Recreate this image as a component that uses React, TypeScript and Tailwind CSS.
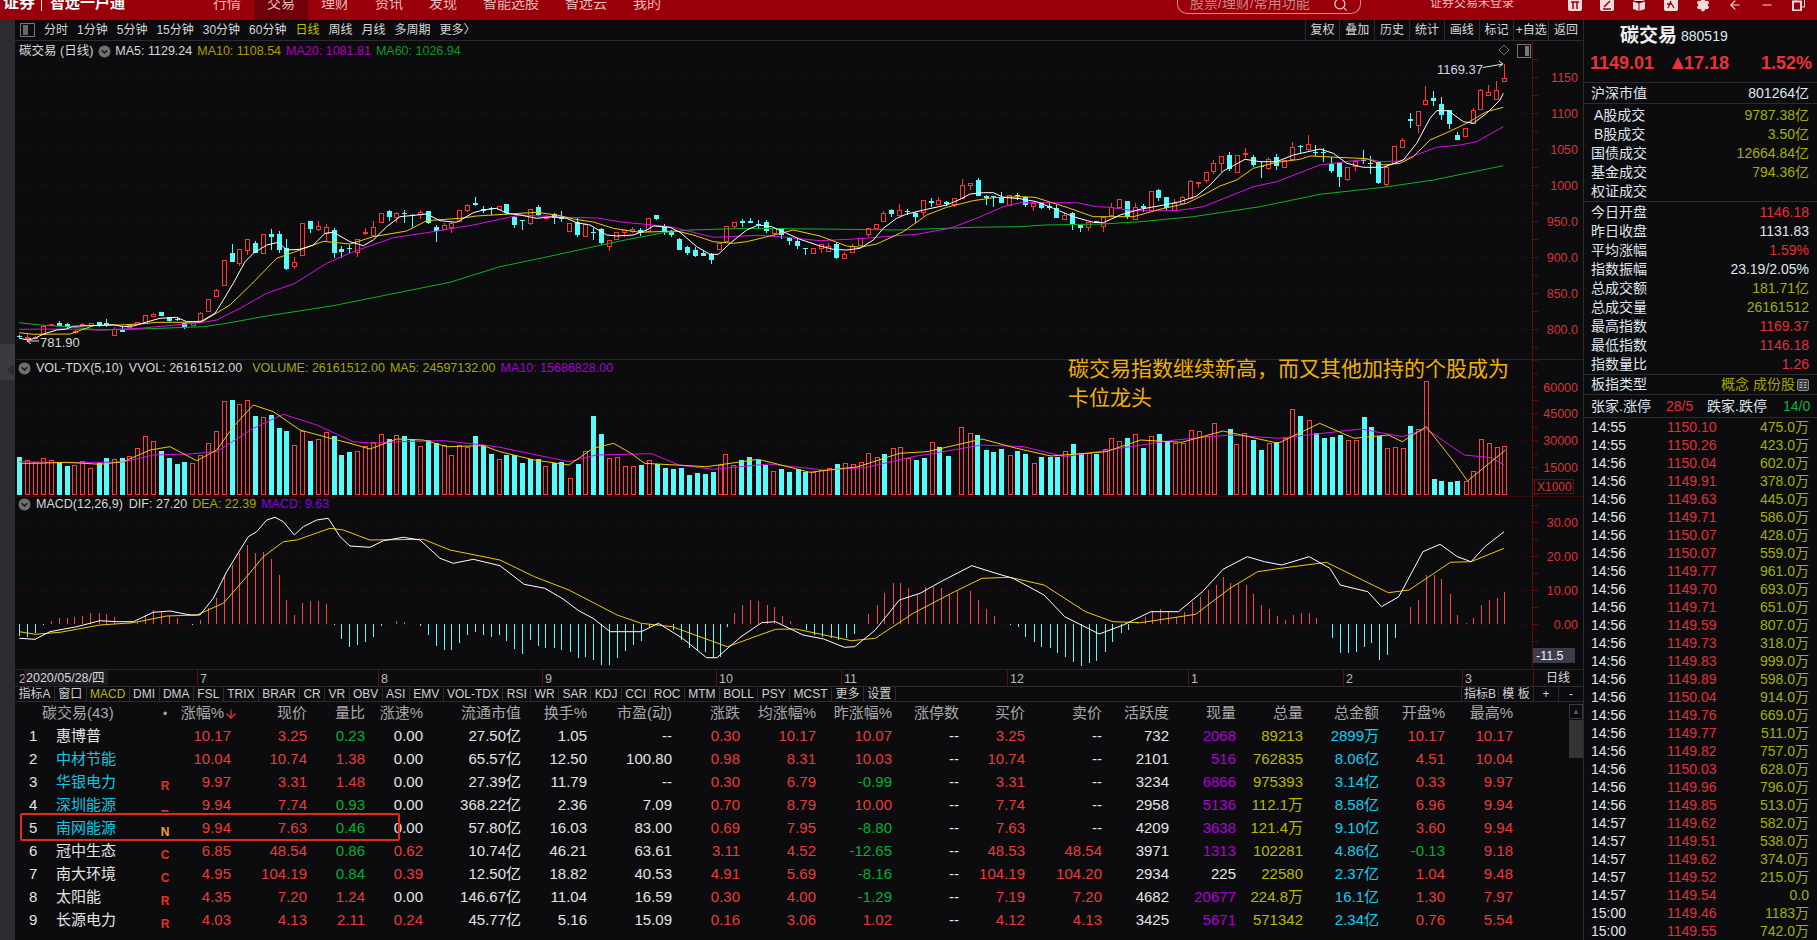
import React from 'react';
import { ArrowDown, ArrowLeft, Minus, Search, Settings } from 'lucide-react';

type Pt = (x: number, y: number) => [number, number];

// chart data was read off in crop coordinates, these map it back to the page
const z7: Pt = (x, y) => [x / 3, 30 + y / 3];
const z8: Pt = (x, y) => [1300 + x / 3, 40 + y / 3];
const z9: Pt = (x, y) => [x / 3, 350 + y / 3];
const z10: Pt = (x, y) => [500 + x / 3, 150 + y / 3];
const z11: Pt = (x, y) => [1000 + x / 3, 100 + y / 3];
const z12: Pt = (x, y) => [500 + x / 1.452, 355 + y / 3];

const pts = (map: Pt, s: string) =>
  s
    .trim()
    .split(/\s+/)
    .map((p) => {
      const [x, y] = p.split(',').map(Number);
      const [a, b] = map(x, y);
      return `${a.toFixed(1)},${b.toFixed(1)}`;
    })
    .join(' ');

const ma5 = [
  pts(z7, '58,925 85,930 105,925 130,912 170,900 200,897 218,889 270,887 340,884 370,890 400,888 440,876 480,865 530,862 560,875 600,876 645,850 670,810 700,760 735,695 760,670 800,645 835,637 860,660 900,658 940,645 975,610 1000,607 1050,635 1090,647 1120,630 1160,590 1200,560 1280,552 1320,572 1370,577 1420,548 1450,540 1490,535 1520,550'),
  pts(z10, '60,195 110,205 160,200 200,205 230,218 270,225 320,255 350,258 400,255 440,240 460,228 510,232 540,247 590,290 630,313 655,313 690,280 740,240 775,225 815,230 860,250 900,268 960,288 1000,298 1040,300 1080,295 1120,270 1150,235 1190,205 1220,192 1280,178 1340,165 1380,148 1410,132 1450,128 1480,128 1510,142'),
  pts(z11, '60,296 110,305 160,325 220,350 280,367 310,368 360,345 420,328 480,317 540,305 590,288 630,255 670,213 700,197 735,178 780,185 830,185 880,165 960,147 1000,160 1040,190 1090,202 1150,202 1210,180 1250,130 1290,55 1310,32 1345,32 1390,65 1420,70 1460,40 1500,0'),
  pts(z8, '610,160'),
].join(' ');
const ma10 = [
  pts(z7, '58,908 100,913 210,912 280,887 360,885 420,882 470,877 560,877 610,873 690,825 755,762 830,685 900,660 970,634 1050,642 1120,620 1220,603 1280,572 1380,565 1430,558'),
  pts(z10, '60,190 110,187 170,195 220,207 280,216 340,235 420,247 530,243 580,255 640,275 700,280 740,275 810,258 880,240 960,258 1040,288 1080,292 1130,282 1210,245 1280,195 1340,172 1420,152 1480,143'),
  pts(z11, '60,290 105,292 140,303 200,322 280,350 400,350 480,328 560,310 620,280 660,258 710,240 760,205 830,187 900,178 930,168 1100,176 1150,195 1200,190 1240,170 1290,120 1340,98 1400,70 1460,35 1510,22'),
].join(' ');
const ma20 = [
  pts(z7, '58,898 200,897 300,900 420,895 600,878 650,870 720,835 800,790 885,760 980,700 1060,665 1180,623 1300,605 1420,585'),
  pts(z10, '60,195 200,202 290,204 370,217 460,225 520,232 640,262 780,256 860,262 960,272 1080,266 1180,258 1250,253 1350,235 1430,205 1510,170'),
  pts(z11, '60,308 230,308 290,320 330,322 400,332 530,332 610,320 760,260 830,245 960,195 1060,182 1110,178 1140,185 1200,183 1310,142 1380,135 1430,125 1510,80'),
].join(' ');
const ma60 = [
  pts(z7, '58,878 120,885 200,890 300,900 420,897 610,890 680,880 800,858 1000,827 1170,793 1350,757'),
  pts(z10, '0,350 130,323 350,275 490,248 570,240 740,235 1040,238 1200,240 1420,232'),
  pts(z11, '60,380 135,375 310,372 420,365 580,350 780,320 960,283 1150,262 1300,240 1510,197'),
].join(' ');

// x top bottom high low, r = up (hollow red), c = down (solid cyan)
const candleSets: [Pt, string][] = [
  [
    z7,
    `58 917 921 914 925 c;82 920 924 913 928 r;106 921 923 918 926 r;130 887 912 885 915 r;154 883 886 883 886 r;178 880 888 874 888 c;202 883 892 880 893 c;224 902 905 898 912 r;246 882 885 878 886 r;272 880 884 880 885 r;296 877 884 876 890 c;318 880 884 867 890 c;343 896 915 892 917 r;367 901 905 890 907 c;388 884 892 884 893 r;412 877 882 876 885 r;436 856 878 856 878 r;460 853 858 849 862 r;484 847 858 846 858 c;508 862 872 860 875 c;532 868 871 860 873 c;553 880 890 878 896 c;578 878 885 878 885 r;601 848 876 847 878 r;625 806 844 806 844 r;649 781 798 776 800 r;673 691 766 691 766 r;697 670 695 642 695 c;718 658 698 658 708 r;742 628 660 628 675 r;766 640 668 634 668 c;790 613 668 612 668 r;814 612 622 597 660 c;838 612 660 603 670 c;859 655 716 627 720 c;883 697 707 681 718 r;907 580 676 580 676 r;931 574 597 574 608 c;955 589 598 572 604 r;979 590 608 583 632 r;1003 600 670 595 684 c;1024 657 666 648 684 c;1048 655 656 644 670 c;1072 626 665 626 682 r;1096 605 610 594 614 r;1120 592 614 574 622 r;1144 550 575 550 575 r;1168 543 560 540 572 c;1189 548 560 546 580 r;1213 548 552 540 578 c;1237 555 558 552 590 c;1261 545 552 541 568 r;1285 544 578 542 582 c;1309 590 602 586 637 c;1333 586 598 578 600 r;1354 580 592 574 608 r;1378 539 573 539 575 r;1402 524 540 522 545 r;1426 519 524 501 528 c;1450 536 543 529 550 c;1474 535 537 530 555 c;1498 527 536 527 536 r;1519 523 550 523 555 c;1543 561 585 558 594 c`,
  ],
  [
    z10,
    `67 211 213 211 240 c;91 178 218 178 225 r;115 171 195 165 198 c;139 198 203 195 210 r;163 193 205 189 222 c;184 200 208 183 216 c;208 220 243 220 246 r;232 217 255 205 261 c;256 222 258 220 262 r;280 247 250 235 270 c;304 238 280 234 284 c;328 271 287 271 303 r;349 247 266 247 267 r;373 239 247 239 260 r;397 238 243 232 250 r;421 240 248 235 258 c;445 205 242 205 246 r;469 195 207 195 210 c;493 228 246 222 256 c;514 246 255 240 260 c;538 267 300 264 300 c;562 291 308 288 315 c;586 300 318 290 320 c;610 309 317 300 318 c;634 313 330 309 342 c;658 280 296 280 297 r;679 229 272 229 274 r;703 217 227 217 237 r;727 214 219 208 231 c;751 213 218 204 219 c;775 221 224 210 234 c;799 216 242 210 249 c;823 235 248 235 259 r;844 234 255 234 268 c;868 264 272 260 285 c;892 273 288 263 297 c;916 295 298 295 315 c;940 295 308 295 309 r;964 281 293 281 309 r;985 288 302 280 303 r;1009 282 325 278 328 c;1033 313 324 306 328 r;1057 287 305 283 306 r;1081 265 285 265 287 r;1105 235 251 235 261 r;1129 223 234 223 238 r;1150 190 213 184 214 r;1174 180 192 177 201 c;1198 180 195 162 198 r;1222 182 185 177 194 c;1246 190 201 186 219 c;1270 151 187 151 198 r;1294 154 158 144 172 c;1315 150 162 141 164 r;1339 157 163 153 169 c;1363 145 163 145 172 r;1387 106 143 87 144 r;1411 100 106 100 120 r;1435 90 137 84 137 c;1459 139 144 135 165 c;1480 139 141 139 171 c;1504 143 159 126 159 c;1528 136 165 136 168 r`,
  ],
  [
    z11,
    `51 286 289 280 300 c;75 291 315 288 320 c;99 308 317 308 333 r;123 307 325 305 327 c;147 318 323 310 330 c;169 324 354 316 354 c;193 345 356 340 356 r;217 340 373 337 390 c;241 375 384 375 396 c;265 366 380 366 393 r;289 364 368 364 370 c;310 352 377 352 396 r;334 322 345 310 345 r;358 298 322 298 327 r;382 304 352 304 356 c;406 322 357 310 357 r;430 318 325 313 335 c;454 274 330 274 332 r;475 270 294 266 303 c;499 292 325 292 330 c;523 310 329 298 329 r;547 292 310 288 312 r;571 244 294 240 294 r;595 245 250 245 264 r;619 217 240 217 249 r;640 190 212 181 222 r;664 169 188 169 215 r;688 165 206 156 212 c;712 166 215 166 216 r;736 160 163 144 174 r;760 171 195 165 200 c;784 198 201 185 234 c;805 176 204 172 210 r;829 171 198 163 209 c;853 179 200 179 201 r;877 142 178 126 180 r;901 137 139 135 160 c;925 133 148 105 153 r;946 155 157 135 168 c;970 155 157 145 186 c;994 192 214 170 219 c;1018 189 231 186 261 c;1042 202 236 202 243 r;1066 183 198 180 213 r;1090 181 183 150 192 c;1111 189 192 168 221 c;1135 187 249 183 252 c;1159 200 251 196 261 r;1183 139 188 139 190 r;1207 120 140 114 140 r;1231 58 63 40 84 c;1255 34 74 34 99 r`,
  ],
  [
    z8,
    `376 181 193 138 193 r;400 174 183 153 198 c;424 192 225 171 240 c;448 209 251 209 267 c;472 285 299 277 300 c;496 265 287 265 288 r;520 211 249 205 250 r;541 151 206 148 208 r;565 157 166 135 167 r;589 151 176 123 177 r;613 115 122 72 122 r`,
  ],
];

const candles = candleSets.flatMap(([map, s]) =>
  s.split(';').map((row) => {
    const [x, t, b, h, l, kind] = row.split(' ');
    return {
      x: Math.round(map(+x, 0)[0]),
      top: Math.round(map(0, +t)[1]),
      bottom: Math.round(map(0, +b)[1]),
      high: Math.round(map(0, +h)[1]),
      low: Math.round(map(0, +l)[1]),
      up: kind === 'r',
    };
  })
);

const volA =
  'c58,321 r82,330 r106,335 r130,324 r154,330 c178,339 c202,347 r222,345 r246,334 r271,355 c296,340 c319,324 r343,328 c367,324 r388,319 r412,295 r436,259 r460,274 c484,303 c508,324 c532,342 c553,336 r577,340 r601,315 r625,280 r649,244 r673,154 c697,150 r718,163 r742,151 c766,198 r790,202 c814,195 c838,234 c859,243 r883,286 r907,244 c931,273 r955,268 r979,247 c1003,259 c1024,315 c1048,306 r1072,304 r1096,289 r1120,277 r1144,253 c1168,267 r1189,256 c1213,258 c1237,267 r1261,289 c1285,270 c1309,279 r1333,286 r1354,315 r1378,286 r1402,290 c1426,258 c1450,285 c1474,312 r1498,328 c1519,315 c1543,315';
const volB =
  'c32,323 c43,312 c55,312 r66,333 c78,325 c89,322 r101,370 c113,326 r124,288 c135,183 c147,237 r158,310 r170,306 r182,333 r193,333 c205,329 r216,316 c228,328 c240,340 c251,343 c263,338 c274,360 c286,353 c297,356 c309,352 r320,331 r327,297 r339,330 c350,315 c362,306 c374,316 c385,330 r397,348 c408,342 c420,352 c432,343 c443,352 r455,352 r466,345 r478,340 c489,327 r501,323 r512,327 r524,322 r535,295 r547,305 c558,298 r570,278 r581,275 r592,310 c604,316 c615,308 r627,262 c638,276 c650,303 r670,217 r682,235 c693,241 c705,285 c716,291 c728,282 r740,300 c751,287 c763,297 r775,325 c786,305 c798,305 c809,305 r820,287 c832,267 c843,295 r855,295 c866,298 r878,283 r887,250 r899,258 c911,250 r922,238 c934,279 r945,243 c957,237 c968,262 r980,265 r992,264 r1003,226 r1015,228 r1026,243 r1037,205 c1060,222 r1068,267 r1080,235 c1093,255 c1105,285 r1117,265 c1127,262 r1140,250 r1150,163 c1162,183 r1174,195 c1185,233 c1197,248 c1208,245 c1220,240 r1232,255 r1243,255 c1254,186 c1265,216 c1277,243 r1288,280 r1299,277 r1311,280 c1322,213 r1333,222 r1344,78 c1356,372 c1367,378 c1379,381 c1390,378 r1402,378 r1413,348 r1425,253 r1436,265 r1447,276 r1458,273';

const parseBars = (map: Pt, s: string) =>
  s.split(' ').map((b) => {
    const [x, y] = b.slice(1).split(',').map(Number);
    const [a, t] = map(x, y);
    return { x: Math.round(a), y: Math.round(t), up: b[0] === 'r' };
  });

const volBars = [...parseBars(z9, volA), ...parseBars(z12, volB)];

const macdA =
  'c58,858 c82,862 c106,850 c130,826 r154,812 r178,805 r202,805 r222,802 r246,798 r271,790 r296,790 r319,793 r343,802 r367,818 r388,820 r412,815 r436,795 r460,781 r484,785 r508,798 r532,803 r553,822 c577,824 r601,810 r625,775 r649,743 r673,675 r697,645 r718,610 r742,585 r766,610 r790,606 r814,627 r838,676 r859,750 r883,795 r907,760 r931,753 r955,753 r979,762 c1003,825 c1024,866 c1048,890 c1072,884 c1096,876 c1120,860 c1144,828 r1189,813 r1213,816 c1261,828 c1285,855 c1309,888 c1333,900 c1354,900 c1378,878 c1402,855 c1426,846 c1450,854 c1474,860 c1498,855 c1519,872 c1543,897';
const macdB =
  'c32,896 c43,855 c55,872 c66,880 c78,878 c89,885 c101,890 c113,910 c124,905 c135,915 c147,930 c158,930 c170,908 c182,888 c193,870 c205,858 c216,815 c228,810 c251,825 c263,855 c274,880 c286,888 c297,890 c309,905 c320,905 c330,815 r340,775 r352,750 r363,735 r375,738 r387,750 r398,755 r410,782 r421,798 c444,825 c456,840 c468,845 c480,850 c491,855 c503,850 c514,838 r535,778 r547,750 r558,715 r570,685 r581,684 r593,700 r605,720 r617,695 r628,695 r640,700 r652,720 r663,708 r682,708 r694,735 r706,762 r717,782 c740,810 c752,815 c763,845 c775,860 c786,875 c798,880 c809,895 c820,905 c832,922 c843,932 c855,925 c866,918 c878,890 c889,860 c901,835 c912,825 r925,800 r936,785 r947,768 r958,762 r970,770 r982,785 r993,770 r1005,740 r1016,725 r1028,705 r1039,690 r1050,665 r1060,683 r1072,683 r1083,690 r1094,717 r1105,750 r1117,762 r1128,783 r1140,795 r1151,780 r1163,775 r1174,775 r1185,790 c1208,850 c1220,895 c1231,895 c1243,890 c1254,875 c1265,865 c1277,915 c1288,900 c1299,850 r1322,755 r1333,735 r1344,660 r1356,660 r1367,672 r1379,718 r1390,780 r1402,805 r1413,790 r1425,750 r1436,735 r1447,730 r1458,710';
const macdBars = [...parseBars(z9, macdA), ...parseBars(z12, macdB)];

const volMa5 = [
  pts(z9, '58,340 110,340 200,337 300,343 370,335 450,300 510,290 590,332 650,300 700,230 760,165 820,185 900,240 980,262 1050,280 1110,297 1190,267 1270,270 1340,290 1450,287'),
  pts(z12, '0,290 50,315 100,330 135,280 165,265 190,295 210,325 300,335 375,313 450,352 520,335 580,295 620,290 700,252 750,280 800,303 880,290 930,255 990,262 1050,228 1130,265 1190,205 1240,250 1290,240 1310,260 1345,215 1385,320 1405,378 1460,285'),
].join(' ');
const volMa10 = [
  pts(z9, '58,335 200,338 370,336 460,315 570,312 650,305 760,235 850,193 950,225 1060,275 1120,280 1200,275 1330,272 1450,285'),
  pts(z12, '0,277 100,320 140,300 220,296 260,330 310,343 390,327 470,345 530,338 600,305 700,270 760,275 820,305 900,280 980,255 1060,240 1130,250 1250,222 1310,245 1345,222 1400,300 1440,308 1458,330'),
].join(' ');
const dif = [
  pts(z9, '58,865 105,868 150,845 230,830 300,812 350,815 400,815 460,787 510,783 570,795 600,795 640,745 680,665 720,600 745,560 770,545 800,510 825,502 850,515 883,555 910,530 950,510 985,505 1020,560 1050,588 1110,592 1150,572 1210,562 1260,570 1320,625 1360,640 1420,628'),
  pts(z12, '0,632 35,688 65,700 90,730 115,768 135,790 160,830 205,830 230,805 265,850 300,908 315,908 350,845 380,803 400,800 440,840 470,852 500,877 515,875 545,825 580,735 610,715 640,680 685,632 720,655 745,670 790,720 820,785 870,837 905,810 945,770 985,770 1020,710 1050,643 1085,605 1110,620 1135,630 1175,605 1205,640 1220,690 1260,710 1280,755 1305,725 1340,590 1365,568 1390,605 1410,620 1430,575 1458,530'),
].join(' ');
const dea = [
  pts(z9, '58,845 105,853 180,847 300,825 400,818 500,798 590,795 670,760 740,680 790,620 850,575 890,570 990,535 1030,540 1110,570 1270,568 1350,600'),
  pts(z12, '0,615 50,665 100,705 170,780 205,805 250,815 330,875 400,823 430,822 510,857 545,850 600,775 660,710 700,670 740,667 790,690 850,770 890,800 930,803 1010,778 1060,700 1100,650 1140,638 1200,622 1290,713 1320,705 1380,622 1410,620 1458,580'),
].join(' ');

const ChartLine: React.FC<{ points: string; color: string; width?: number }> = ({ points, color, width = 1 }) => (
  <polyline points={points} fill="none" stroke={color} strokeWidth={width} />
);

const Grid: React.FC<{ ys: number[] }> = ({ ys }) => (
  <g stroke="#4d0c0c" strokeDasharray="1 4">
    {ys.map((y) => (
      <line key={y} x1={16} x2={1532} y1={y + 0.5} y2={y + 0.5} />
    ))}
  </g>
);

const Axis: React.FC<{ top: number; bottom: number; labels: [string, number][]; step: number }> = ({ top, bottom, labels, step }) => {
  const ticks: number[] = [];
  if (labels.length) {
    for (let y = labels[labels.length - 1][1]; y > top; y -= step) ticks.push(y);
    for (let y = labels[labels.length - 1][1] + step; y < bottom; y += step) ticks.push(y);
  }
  return (
    <g>
      <line x1={1532.5} x2={1532.5} y1={top} y2={bottom} stroke="#660a0a" />
      {ticks.map((y) => (
        <line key={y} x1={1533} x2={1538} y1={y + 0.5} y2={y + 0.5} stroke="#660a0a" />
      ))}
      {labels.map(([t, y]) => (
        <text key={t} x={1578} y={y + 5} textAnchor="end" fontSize={12.5} fill="#d83434">
          {t}
        </text>
      ))}
    </g>
  );
};

const Circle: React.FC = () => (
  <svg width={13} height={13} viewBox="0 0 13 13" className="shrink-0">
    <circle cx={6.5} cy={6.5} r={6} fill="#6f6f72" />
    <path d="M3.7 5.2 6.5 8l2.8-2.8" fill="none" stroke="#111" strokeWidth={1.3} />
  </svg>
);

const mainAxis: [string, number][] = [
  ['1150', 77],
  ['1100', 113],
  ['1050', 149],
  ['1000', 185],
  ['950.0', 221],
  ['900.0', 257],
  ['850.0', 293],
  ['800.0', 329],
];

const MainPanel = () => (
  <div className="relative h-[318px] shrink-0">
    <svg width={1568} height={318} viewBox="15 41 1568 318" className="block">
      <Grid ys={mainAxis.map(([, y]) => y)} />
      <Axis top={41} bottom={359} labels={mainAxis} step={18} />
      <g shapeRendering="crispEdges">
        {candles.map((c, i) =>
          c.up ? (
            <g key={i} stroke="#ff3636">
              <line x1={c.x + 0.5} x2={c.x + 0.5} y1={c.high} y2={c.top} />
              <line x1={c.x + 0.5} x2={c.x + 0.5} y1={c.bottom} y2={c.low} />
              <rect x={c.x - 1.5} y={c.top + 0.5} width={4} height={Math.max(c.bottom - c.top, 1)} fill="none" />
            </g>
          ) : (
            <g key={i} stroke="#54fcfc" fill="#54fcfc">
              <line x1={c.x + 0.5} x2={c.x + 0.5} y1={c.high} y2={c.low} />
              <rect x={c.x - 2} y={c.top} width={5} height={Math.max(c.bottom - c.top, 1)} stroke="none" />
            </g>
          )
        )}
      </g>
      <ChartLine points={ma60} color="#10b02a" />
      <ChartLine points={ma20} color="#d810e8" />
      <ChartLine points={ma10} color="#f0c810" />
      <ChartLine points={ma5} color="#ffffff" />
      <text x={1437} y={74} fontSize={13} fill="#c8d8e8">
        1169.37
      </text>
      <path d="M1483 67.5 1503 64M1499 61l4 3-4 3" fill="none" stroke="#e8e8e8" />
      <text x={40} y={347} fontSize={13} fill="#d8d8d8">
        781.90
      </text>
      <path d="M39 341H27M31 338l-4 3 4 3" fill="none" stroke="#e8e8e8" />
      <path d="M1504 45l5 5-5 5-5-5z" fill="none" stroke="#6e6e6e" />
      <rect x={1517.5} y={44.5} width={13} height={13} fill="none" stroke="#777" />
      <rect x={1525} y={46} width={4} height={10} fill="#777" />
    </svg>
    <div className="absolute left-[4px] top-[1px] flex h-[18px] items-center gap-[5px] text-[12.5px]">
      <span className="text-[#d8d8d8]">碳交易 (日线)</span>
      <Circle />
      <span className="-ml-[1px] text-[#d8d8d8]">MA5: 1129.24</span>
      <span className="text-[#b09a00]">MA10: 1108.54</span>
      <span className="text-[#b000c0]">MA20: 1081.81</span>
      <span className="text-[#109a20]">MA60: 1026.94</span>
    </div>
  </div>
);

const volAxis: [string, number][] = [
  ['60000', 387],
  ['45000', 413],
  ['30000', 440],
  ['15000', 467],
];

const VolumePanel = () => (
  <div className="relative h-[137px] shrink-0">
    <svg width={1568} height={137} viewBox="15 359 1568 137" className="block">
      <Grid ys={volAxis.map(([, y]) => y)} />
      <line x1={15} x2={1583} y1={359.5} y2={359.5} stroke="#660a0a" />
      <Axis top={359} bottom={496} labels={volAxis} step={13.4} />
      <g shapeRendering="crispEdges">
        {volBars.map((b, i) =>
          b.up ? (
            <rect key={i} x={b.x - 1.5} y={b.y + 0.5} width={4} height={494 - b.y} fill="none" stroke="#ff4040" />
          ) : (
            <rect key={i} x={b.x - 2} y={b.y} width={5} height={495 - b.y} fill="#54fcfc" />
          )
        )}
      </g>
      <ChartLine points={volMa10} color="#d810e8" />
      <ChartLine points={volMa5} color="#f0c810" />
      <rect x={1534.5} y={479.5} width={39} height={14} fill="none" stroke="#660a0a" />
      <text x={1537} y={491} fontSize={12} fill="#d83434">
        X1000
      </text>
    </svg>
    <div className="absolute left-[3px] top-[1px] flex h-[16px] items-center gap-[5px] text-[12.5px]">
      <Circle />
      <span className="mr-[1px] text-[#d8d8d8]">VOL-TDX(5,10)</span>
      <span className="mr-[5px] text-[#d8d8d8]">VVOL: 26161512.00</span>
      <span className="text-[#a8a800]">VOLUME: 26161512.00</span>
      <span className="text-[#a8a800]">MA5: 24597132.00</span>
      <span className="text-[#a800d0]">MA10: 15686828.00</span>
    </div>
    <div className="absolute left-[1053px] top-[-5px] w-[460px] text-[21px] leading-[29px] text-[#f0b000]">
      碳交易指数继续新高，而又其他加持的个股成为卡位龙头
    </div>
  </div>
);

const macdAxis: [string, number][] = [
  ['30.00', 522],
  ['20.00', 556],
  ['10.00', 590],
  ['0.00', 624],
];

const MacdPanel = () => (
  <div className="relative h-[173px] shrink-0">
    <svg width={1568} height={173} viewBox="15 496 1568 173" className="block">
      <Grid ys={macdAxis.map(([, y]) => y)} />
      <line x1={15} x2={1583} y1={496} y2={496} stroke="#660a0a" />
      <Axis top={496} bottom={669} labels={macdAxis} step={17} />
      <g shapeRendering="crispEdges">
        {macdBars.map((b, i) => (
          <line key={i} x1={b.x + 0.5} x2={b.x + 0.5} y1={624} y2={b.y} stroke={b.up ? '#ff4040' : '#54fcfc'} />
        ))}
      </g>
      <ChartLine points={dea} color="#f0c810" />
      <ChartLine points={dif} color="#ffffff" />
      <rect x={1533} y={648} width={42} height={15} fill="#3b3e4a" />
      <text x={1536} y={660} fontSize={12.5} fill="#f0f0f0">
        -11.5
      </text>
    </svg>
    <div className="absolute left-[3px] top-0 flex h-[16px] items-center gap-[5px] text-[12.5px]">
      <Circle />
      <span className="mr-[1px] text-[#d8d8d8]">MACD(12,26,9)</span>
      <span className="text-[#d8d8d8]">DIF: 27.20</span>
      <span className="text-[#a8a800]">DEA: 22.39</span>
      <span className="text-[#8a00e0]">MACD: 9.63</span>
    </div>
  </div>
);

const dateLabels: [string, number][] = [
  ['7', 200],
  ['8', 381],
  ['9', 545],
  ['10', 719],
  ['11', 844],
  ['12', 1010],
  ['1', 1191],
  ['2', 1346],
  ['3', 1465],
];

const DateAxis = () => (
  <div className="flex h-[17px] shrink-0 border-t border-[#660a0a]">
    <svg width={1518} height={16} viewBox="15 670 1518 16" className="block shrink-0">
      {dateLabels.map(([t, x]) => (
        <g key={t}>
          <line x1={x - 2.5} x2={x - 2.5} y1={670} y2={686} stroke="#660a0a" />
          <text x={x} y={683} fontSize={12.5} fill="#b8b8b8">
            {t}
          </text>
        </g>
      ))}
      <text x={19} y={683} fontSize={12.5} fill="#b8b8b8">
        2
      </text>
      <rect x={25} y={670} width={83} height={15} fill="#1b1b20" />
      <line x1={25} x2={25} y1={670} y2={685} stroke="#660a0a" />
      <text x={26} y={682} fontSize={12.5} fill="#d8d8d8">
        2020/05/28/四
      </text>
    </svg>
    <div className="flex flex-1 items-center justify-end border-l border-[#660a0a] pr-[13px] text-xs text-[#d8d8d8]">日线</div>
  </div>
);

const timeframes = ['分时', '1分钟', '5分钟', '15分钟', '30分钟', '60分钟', '日线', '周线', '月线', '多周期', '更多〉'];
const chartTools = ['复权', '叠加', '历史', '统计', '画线', '标记', '+自选', '返回'];

const Toolbar = () => (
  <div className="flex h-[21px] shrink-0 items-center justify-between border-b border-[#2c2c30] pl-[5px] text-xs">
    <div className="flex items-center gap-[9px] text-[#d8d8d8]">
      <div className="mr-[0px] flex h-[14px] w-[15px] items-center border border-[#777] pl-[2px]">
        <div className="h-[10px] w-[5px] bg-[#666]" />
      </div>
      {timeframes.map((t) => (
        <span key={t} className={t === '日线' ? 'text-[#c0c000]' : ''}>
          {t}
        </span>
      ))}
    </div>
    <div className="flex h-full">
      {chartTools.map((t) => (
        <div key={t} className="flex w-[34.8px] items-center justify-center border-l border-[#2c2c30] text-[#d8d8d8]">
          {t}
        </div>
      ))}
    </div>
  </div>
);

const indicators = ['指标A', '窗口', 'MACD', 'DMI', 'DMA', 'FSL', 'TRIX', 'BRAR', 'CR', 'VR', 'OBV', 'ASI', 'EMV', 'VOL-TDX', 'RSI', 'WR', 'SAR', 'KDJ', 'CCI', 'ROC', 'MTM', 'BOLL', 'PSY', 'MCST', '更多', '设置'];

const IndicatorTabs = () => (
  <div className="flex h-[16px] shrink-0 justify-between border-t border-b border-[#2c2c30] text-xs text-[#d0d0d0]">
    <div className="flex">
      {indicators.map((t) => (
        <div key={t} className={`flex items-center border-r border-[#2c2c30] px-[3.4px] ${t === 'MACD' ? 'text-[#b8b800]' : ''}`}>
          {t}
        </div>
      ))}
    </div>
    <div className="flex">
      <div className="flex w-[37px] items-center justify-center border-l border-[#2c2c30]">指标B</div>
      <div className="flex w-[35px] items-center justify-center border-l border-[#2c2c30]">模 板</div>
      <div className="flex w-[25px] items-center justify-center border-l border-[#2c2c30]">+</div>
      <div className="flex w-[25px] items-center justify-center border-l border-[#2c2c30]">-</div>
    </div>
  </div>
);

interface Column {
  title: string;
  w: string;
  tone: string;
}

const RED = 'text-[#e83c3c]';
const GREEN = 'text-[#00b034]';
const WHITE = 'text-[#e4e4e4]';

const columns: Column[] = [
  { title: '涨幅%', w: 'w-[58px]', tone: 'red' },
  { title: '现价', w: 'w-[76px]', tone: 'red' },
  { title: '量比', w: 'w-[58px]', tone: 'ratio' },
  { title: '涨速%', w: 'w-[58px]', tone: 'speed' },
  { title: '流通市值', w: 'w-[98px]', tone: 'white' },
  { title: '换手%', w: 'w-[66px]', tone: 'white' },
  { title: '市盈(动)', w: 'w-[85px]', tone: 'white' },
  { title: '涨跌', w: 'w-[68px]', tone: 'red' },
  { title: '均涨幅%', w: 'w-[76px]', tone: 'red' },
  { title: '昨涨幅%', w: 'w-[76px]', tone: 'sign' },
  { title: '涨停数', w: 'w-[67px]', tone: 'white' },
  { title: '买价', w: 'w-[66px]', tone: 'red' },
  { title: '卖价', w: 'w-[77px]', tone: 'ask' },
  { title: '活跃度', w: 'w-[67px]', tone: 'white' },
  { title: '现量', w: 'w-[67px]', tone: 'vol' },
  { title: '总量', w: 'w-[67px]', tone: 'olive' },
  { title: '总金额', w: 'w-[76px]', tone: 'cyan' },
  { title: '开盘%', w: 'w-[66px]', tone: 'sign' },
  { title: '最高%', w: 'w-[68px]', tone: 'red' },
];

const toneClass = (tone: string, v: string) => {
  switch (tone) {
    case 'red':
      return RED;
    case 'ratio':
      return parseFloat(v) < 1 ? GREEN : RED;
    case 'speed':
      return v === '0.00' ? WHITE : RED;
    case 'sign':
      return v.startsWith('-') ? GREEN : RED;
    case 'ask':
      return v === '--' ? WHITE : RED;
    case 'vol':
      return v === '225' ? WHITE : 'text-[#b000d8]';
    case 'olive':
      return 'text-[#b8b800]';
    case 'cyan':
      return 'text-[#10d0f0]';
    default:
      return WHITE;
  }
};

const stocks: { name: string; cyan?: boolean; flag?: string; values: string[] }[] = [
  { name: '惠博普', values: ['10.17', '3.25', '0.23', '0.00', '27.50亿', '1.05', '--', '0.30', '10.17', '10.07', '--', '3.25', '--', '732', '2068', '89213', '2899万', '10.17', '10.17'] },
  { name: '中材节能', cyan: true, values: ['10.04', '10.74', '1.38', '0.00', '65.57亿', '12.50', '100.80', '0.98', '8.31', '10.03', '--', '10.74', '--', '2101', '516', '762835', '8.06亿', '4.51', '10.04'] },
  { name: '华银电力', cyan: true, flag: 'R', values: ['9.97', '3.31', '1.48', '0.00', '27.39亿', '11.79', '--', '0.30', '6.79', '-0.99', '--', '3.31', '--', '3234', '6866', '975393', '3.14亿', '0.33', '9.97'] },
  { name: '深圳能源', cyan: true, flag: 'R', values: ['9.94', '7.74', '0.93', '0.00', '368.22亿', '2.36', '7.09', '0.70', '8.79', '10.00', '--', '7.74', '--', '2958', '5136', '112.1万', '8.58亿', '6.96', '9.94'] },
  { name: '南网能源', cyan: true, flag: 'N', values: ['9.94', '7.63', '0.46', '0.00', '57.80亿', '16.03', '83.00', '0.69', '7.95', '-8.80', '--', '7.63', '--', '4209', '3638', '121.4万', '9.10亿', '3.60', '9.94'] },
  { name: '冠中生态', flag: 'C', values: ['6.85', '48.54', '0.86', '0.62', '10.74亿', '46.21', '63.61', '3.11', '4.52', '-12.65', '--', '48.53', '48.54', '3971', '1313', '102281', '4.86亿', '-0.13', '9.18'] },
  { name: '南大环境', flag: 'C', values: ['4.95', '104.19', '0.84', '0.39', '12.50亿', '18.82', '40.53', '4.91', '5.69', '-8.16', '--', '104.19', '104.20', '2934', '225', '22580', '2.37亿', '1.04', '9.48'] },
  { name: '太阳能', flag: 'R', values: ['4.35', '7.20', '1.24', '0.00', '146.67亿', '11.04', '16.59', '0.30', '4.00', '-1.29', '--', '7.19', '7.20', '4682', '20677', '224.8万', '16.1亿', '1.30', '7.97'] },
  { name: '长源电力', flag: 'R', values: ['4.03', '4.13', '2.11', '0.24', '45.77亿', '5.16', '15.09', '0.16', '3.06', '1.02', '--', '4.12', '4.13', '3425', '5671', '571342', '2.34亿', '0.76', '5.54'] },
];

const StockTable = () => (
  <div className="relative flex h-[238px] shrink-0">
    <div className="flex-1">
      <div className="flex h-[23px] items-center text-[15px] text-[#a8a8a8]">
        <div className="w-[142px] pl-[27px]">碳交易(43)</div>
        <div className="w-[16px] text-center text-xs">•</div>
        {columns.map((c) => (
          <div key={c.title} className={`${c.w} flex items-center justify-end`}>
            {c.title}
            {c.title === '涨幅%' && <ArrowDown size={14} className="-mr-[7px] text-[#e83c3c]" />}
          </div>
        ))}
      </div>
      {stocks.map((s, i) => (
        <div key={s.name} className="flex h-[23px] items-center text-[15px]">
          <div className="w-[41px] pl-[14px] text-[#e4e4e4]">{i + 1}</div>
          <div className={`w-[101px] ${s.cyan ? 'text-[#10c8e0]' : 'text-[#e4e4e4]'}`}>{s.name}</div>
          {/* row 4's flag is partly hidden under the red marker box in the picture */}
          <div className={`w-[16px] pt-[7px] text-center text-[12px] font-bold ${i === 3 ? 'h-[13px] overflow-hidden' : ''} ${s.flag === 'N' ? 'text-[#f0a020]' : 'text-[#e83020]'}`}>{s.flag}</div>
          {s.values.map((v, j) => (
            <div key={j} className={`${columns[j].w} text-right ${toneClass(columns[j].tone, v)}`}>
              {v}
            </div>
          ))}
        </div>
      ))}
    </div>
    <div className="flex w-[14px] shrink-0 flex-col gap-[1px] pt-[2px]">
      <div className="flex h-[15px] items-center justify-center border border-[#3a3a3e] text-[8px] text-[#555]">▲</div>
      <div className="h-[38px] bg-[#333336]" />
    </div>
    <div className="absolute left-[5px] top-[111px] h-[28px] w-[380px] rounded-[2px] border-2 border-[#e62a1a]" />
  </div>
);

const tabs = ['行情', '交易', '理财', '资讯', '发现', '智能选股', '智远云', '我的'];

const TopBar = () => (
  <div className="flex h-5 shrink-0 overflow-hidden bg-[#99000a] text-[14px] leading-[20px] text-[#e8bcbc]">
    <div className="flex w-[200px] shrink-0 items-start">
      <div className="-mt-[7px] pl-[3px] text-[16px] font-bold text-white">证券</div>
      <div className="ml-[6px] h-[11px] w-px bg-white" />
      <div className="-mt-[7px] ml-[8px] text-[15px] font-bold text-white">智远一户通</div>
    </div>
    <div className="flex">
      {tabs.map((t) => (
        <div key={t} className={`-mt-[7px] h-[27px] px-[13px] pt-0 ${t === '交易' ? 'bg-[#70000a]' : ''}`}>
          {t}
        </div>
      ))}
    </div>
    <div className="ml-[503px] flex h-[14px] w-[184px] shrink-0 items-end justify-between rounded-b-[10px] border border-t-0 border-[#d88a8a] px-3 text-[#c88888]">
      <span className="leading-[20px]">股票/理财/常用功能</span>
      <Search size={15} className="mb-[1px] text-[#f0d0d0]" />
    </div>
    <div className="-mt-[7px] ml-[69px] shrink-0 text-xs leading-[20px]">证券交易未登录</div>
    <div className="ml-[54px] flex items-start gap-[18px] text-white">
      <svg width={14} height={14} viewBox="0 0 14 14" className="-mt-[3px]">
        <rect width={14} height={14} rx={2} fill="#f4dcdc" />
        <path d="M3 5h8M5 5v7M9 5v7" stroke="#99000a" strokeWidth={1.5} />
      </svg>
      <svg width={14} height={14} viewBox="0 0 14 14" className="-mt-[3px]">
        <rect width={14} height={14} rx={2} fill="#f4dcdc" />
        <path d="M3 12h8M10 4 4 10" stroke="#99000a" strokeWidth={1.5} />
      </svg>
      <svg width={14} height={14} viewBox="0 0 14 14" className="-mt-[3px]">
        <path d="M1 4l6-3 6 3v8l-6 2-6-2z" fill="#f4dcdc" />
        <path d="M7 6v8M1 4l6 2 6-2" stroke="#99000a" />
      </svg>
      <svg width={14} height={14} viewBox="0 0 14 14" className="-mt-[3px]">
        <rect width={14} height={14} rx={2} fill="#f4dcdc" />
        <path d="M4 11 7 4M7 6l3 5M3 7h5" stroke="#99000a" strokeWidth={1.3} fill="none" />
      </svg>
      <Settings size={14} className="-mt-[2px] fill-[#f4dcdc] text-[#f4dcdc]" />
      <ArrowLeft size={14} className="-mt-[2px] text-[#f4dcdc]" />
      <Minus size={14} className="-mt-[2px] text-[#f4dcdc]" />
      <svg width={13} height={13} viewBox="0 0 13 13" className="-mt-[2px]">
        <path d="M4 3V.5h8.5V9H10" fill="none" stroke="#f4dcdc" />
        <rect x={1} y={3.5} width={8} height={9} fill="none" stroke="#f4dcdc" strokeWidth={2} />
      </svg>
    </div>
  </div>
);

const OLIVE = 'text-[#a4b000]';
const PANEL_RED = 'text-[#e03038]';
const PANEL_WHITE = 'text-[#dfe6ee]';

const volumeRows: [string, string][] = [
  ['A股成交', '9787.38亿'],
  ['B股成交', '3.50亿'],
  ['国债成交', '12664.84亿'],
  ['基金成交', '794.36亿'],
  ['权证成交', ''],
];

const statRows: [string, string, string][] = [
  ['今日开盘', '1146.18', PANEL_RED],
  ['昨日收盘', '1131.83', PANEL_WHITE],
  ['平均涨幅', '1.59%', PANEL_RED],
  ['指数振幅', '23.19/2.05%', PANEL_WHITE],
  ['总成交额', '181.71亿', OLIVE],
  ['总成交量', '26161512', OLIVE],
  ['最高指数', '1169.37', PANEL_RED],
  ['最低指数', '1146.18', PANEL_RED],
  ['指数量比', '1.26', PANEL_RED],
];

const ticks: [string, string, string][] = [
  ['14:55', '1150.10', '475.0万'],
  ['14:55', '1150.26', '423.0万'],
  ['14:56', '1150.04', '602.0万'],
  ['14:56', '1149.91', '378.0万'],
  ['14:56', '1149.63', '445.0万'],
  ['14:56', '1149.71', '586.0万'],
  ['14:56', '1150.07', '428.0万'],
  ['14:56', '1150.07', '559.0万'],
  ['14:56', '1149.77', '961.0万'],
  ['14:56', '1149.70', '693.0万'],
  ['14:56', '1149.71', '651.0万'],
  ['14:56', '1149.59', '807.0万'],
  ['14:56', '1149.73', '318.0万'],
  ['14:56', '1149.83', '999.0万'],
  ['14:56', '1149.89', '598.0万'],
  ['14:56', '1150.04', '914.0万'],
  ['14:56', '1149.76', '669.0万'],
  ['14:56', '1149.77', '511.0万'],
  ['14:56', '1149.82', '757.0万'],
  ['14:56', '1150.03', '628.0万'],
  ['14:56', '1149.96', '796.0万'],
  ['14:56', '1149.85', '513.0万'],
  ['14:57', '1149.62', '582.0万'],
  ['14:57', '1149.51', '538.0万'],
  ['14:57', '1149.62', '374.0万'],
  ['14:57', '1149.52', '215.0万'],
  ['14:57', '1149.54', '0.0'],
  ['15:00', '1149.46', '1183万'],
  ['15:00', '1149.55', '742.0万'],
];

const SidePanel = () => (
  <div className="flex w-[234px] shrink-0 flex-col border-l border-[#2c2c30] text-[14px] text-[#dfe6ee]">
    <div className="h-[63px] shrink-0 border-b border-[#2c2c30]">
      <div className="flex h-[28px] items-center gap-[4px] pt-[5px] pl-[36px]">
        <span className="text-[19px] font-bold text-[#f0f0f0]">碳交易</span>
        <span>880519</span>
      </div>
      <div className="flex items-center pt-[2px] pr-[5px] pl-[6px] text-[18px] leading-[26px] font-bold text-[#f03038]">
        <span>1149.01</span>
        <span className="ml-[18px] flex items-center">
          <span className="h-0 w-0 border-x-[6px] border-b-[12px] border-x-transparent border-b-[#f03038]" />
          17.18
        </span>
        <span className="ml-auto">1.52%</span>
      </div>
    </div>
    <div className="flex h-[21px] shrink-0 items-center justify-between border-b border-[#2c2c30] pr-2 pl-[7px]">
      <span>沪深市值</span>
      <span>801264亿</span>
    </div>
    <div className="flex h-[98px] shrink-0 flex-col border-b border-[#2c2c30] pt-[2px] pr-2 pl-[7px]">
      {volumeRows.map(([k, v]) => (
        <div key={k} className="flex h-[19px] items-center justify-between">
          <span className={k[0] === 'A' || k[0] === 'B' ? 'pl-[3px]' : ''}>{k}</span>
          <span className={OLIVE}>{v}</span>
        </div>
      ))}
    </div>
    <div className="flex h-[173px] shrink-0 flex-col border-b border-[#2c2c30] pt-[1px] pr-2 pl-[7px]">
      {statRows.map(([k, v, tone]) => (
        <div key={k} className="flex h-[19px] items-center justify-between">
          <span>{k}</span>
          <span className={tone}>{v}</span>
        </div>
      ))}
    </div>
    <div className="flex h-[20px] shrink-0 items-center justify-between border-b border-[#2c2c30] pr-2 pl-[7px]">
      <span>板指类型</span>
      <span className="flex items-center gap-[2px] text-[#a4a400]">
        概念 成份股
        <svg width={12} height={12} viewBox="0 0 12 12">
          <rect x={0.5} y={0.5} width={11} height={11} rx={1.5} fill="#3c3c3c" stroke="#8a8a8a" />
          <path d="M2.5 3.5h3M7 3.5h2.5M2.5 6h3M7 6h2.5M2.5 8.5h3M7 8.5h2.5" stroke="#c0c0c0" />
        </svg>
      </span>
    </div>
    <div className="flex h-[23px] shrink-0 items-center border-b border-[#2c2c30] pl-[7px]">
      <span className="w-[75px]">张家.涨停</span>
      <span className={`w-[41px] ${PANEL_RED}`}>28/5</span>
      <span className="w-[76px]">跌家.跌停</span>
      <span className="text-[#10b040]">14/0</span>
    </div>
    <div className="flex flex-col">
      {ticks.map(([t, p, v], i) => (
        <div key={i} className="flex h-[18px] shrink-0 items-center pr-2 pl-[7px]">
          <span className="w-[76px]">{t}</span>
          <span className={PANEL_RED}>{p}</span>
          <span className={`ml-auto ${OLIVE}`}>{v}</span>
        </div>
      ))}
    </div>
  </div>
);

const LeftRail = () => (
  <div className="flex w-[15px] shrink-0 flex-col bg-[#2b2b30]">
    <div className="mt-[324px] flex h-[36px] items-end bg-[#3a3a40] pb-[4px] pl-[7px]">
      <div className="h-0 w-0 border-y-[6px] border-r-[7px] border-y-transparent border-r-[#2b2b30]" />
    </div>
  </div>
);

export default function App() {
  return (
    <div className="flex h-[940px] w-[1817px] flex-col overflow-hidden bg-[#0c0c0f] font-['Liberation_Sans','Noto_Sans_CJK_SC',sans-serif]">
      <TopBar />
      <div className="flex min-h-0 flex-1">
        <LeftRail />
        <div className="flex w-[1568px] shrink-0 flex-col">
          <Toolbar />
          <MainPanel />
          <VolumePanel />
          <MacdPanel />
          <DateAxis />
          <IndicatorTabs />
          <StockTable />
        </div>
        <SidePanel />
      </div>
    </div>
  );
}
